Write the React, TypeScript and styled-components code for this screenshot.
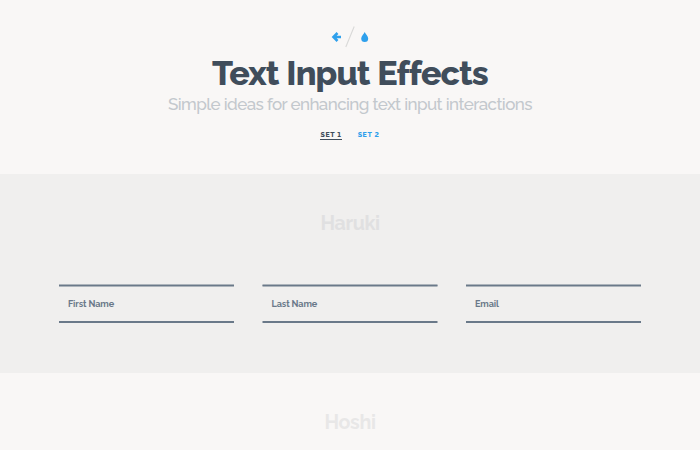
import React from "react";
import styled, { createGlobalStyle } from "styled-components";

const GlobalStyle = createGlobalStyle`
  * { box-sizing: border-box; }
  html, body { height: 100%; margin: 0; overflow: hidden; }
  body {
    background: #f9f7f6;
    color: #404d5b;
    font-family: Raleway, Lato, "Open Sans", sans-serif;
    font-variant-numeric: lining-nums;
  }
`;

const Page = styled.div`
  height: 450px;
  overflow: hidden;
`;

const Header = styled.header`
  height: 174px;
  padding-top: 25px;
  display: flex;
  flex-direction: column;
  align-items: center;
`;

const IconLinks = styled.nav`
  height: 24px;
  display: flex;
  svg { display: block; }
`;

const Title = styled.h1`
  margin: 4px 0 0;
  height: 41px;
  font-size: 34px;
  line-height: 41px;
  font-weight: 800;
  letter-spacing: -0.87px;
  word-spacing: 0.7px;
  white-space: nowrap;
`;

const Subtitle = styled.p`
  margin: 0;
  height: 20px;
  font-size: 17px;
  line-height: 20px;
  font-weight: 500;
  color: #c3c8cd;
  letter-spacing: -0.58px;
  white-space: nowrap;
`;

const Sets = styled.nav`
  margin-top: 17px;
  display: flex;
  gap: 16px;
`;

const SetLink = styled.a<{ $current?: boolean }>`
  height: 9px;
  font-size: 7px;
  line-height: 8px;
  font-weight: 800;
  letter-spacing: 0.65px;
  white-space: nowrap;
  color: ${({ $current }) => ($current ? "#404d5b" : "#2fa0ec")};
  border-bottom: 1px solid ${({ $current }) => ($current ? "#404d5b" : "transparent")};
`;

const Section = styled.section<{ $shaded?: boolean }>`
  height: 199px;
  padding-top: 35px;
  background: ${({ $shaded }) => ($shaded ? "#f0efee" : "#f9f7f6")};
`;

const SectionTitle = styled.h2<{ $tone: string }>`
  margin: 0;
  height: 28px;
  font-size: 19.6px;
  line-height: 30px;
  font-weight: 700;
  letter-spacing: -0.35px;
  text-align: center;
  color: ${({ $tone }) => $tone};
`;

const Fields = styled.div`
  display: grid;
  grid-template-columns: repeat(3, 175px);
  column-gap: 28.5px;
  justify-content: center;
  margin-top: 47px;
`;

const Field = styled.label`
  height: 39px;
  padding: 11px 9px 0;
  background:
    linear-gradient(#6a7989, #6a7989) 0 1px / 100% 1px no-repeat,
    linear-gradient(#adb4bb, #adb4bb) 0 0 / 100% 3px no-repeat,
    linear-gradient(#6a7989, #6a7989) 0 100% / 100% 2px no-repeat;

  &:nth-child(2) {
    padding-left: 9.5px;
    transform: translateX(-0.5px);
  }
`;

const FieldLabel = styled.span`
  display: block;
  font-size: 9.1px;
  line-height: 18px;
  font-weight: 700;
  color: #6a7989;
  letter-spacing: -0.12px;
`;

const fields = ["First Name", "Last Name", "Email"];

export default function App() {
  return (
    <Page>
      <GlobalStyle />
      <Header>
        <IconLinks>
          <svg width="40" height="24" viewBox="0 0 40 24">
            <path d="M7.5 8 3.5 12 7.5 16M4 12H11" fill="none" stroke="#2fa0ec" strokeWidth="2.6" />
            <path d="M24.2 1.5 15.8 22" fill="none" stroke="#d9d9d8" strokeWidth="1.1" />
            <path d="M34.7 7C34 9.3 31.2 10.8 31.2 13.6a3.5 3.5 0 0 0 7 0C38.2 10.8 35.4 9.3 34.7 7Z" fill="#2fa0ec" />
          </svg>
        </IconLinks>
        <Title>Text Input Effects</Title>
        <Subtitle>Simple ideas for enhancing text input interactions</Subtitle>
        <Sets>
          <SetLink $current>SET 1</SetLink>
          <SetLink>SET 2</SetLink>
        </Sets>
      </Header>
      <Section $shaded>
        <SectionTitle $tone="#e0e0e1">Haruki</SectionTitle>
        <Fields>
          {fields.map((name) => (
            <Field key={name}>
              <FieldLabel>{name}</FieldLabel>
            </Field>
          ))}
        </Fields>
      </Section>
      <Section>
        <SectionTitle $tone="#e8e7e7">Hoshi</SectionTitle>
      </Section>
    </Page>
  );
}
